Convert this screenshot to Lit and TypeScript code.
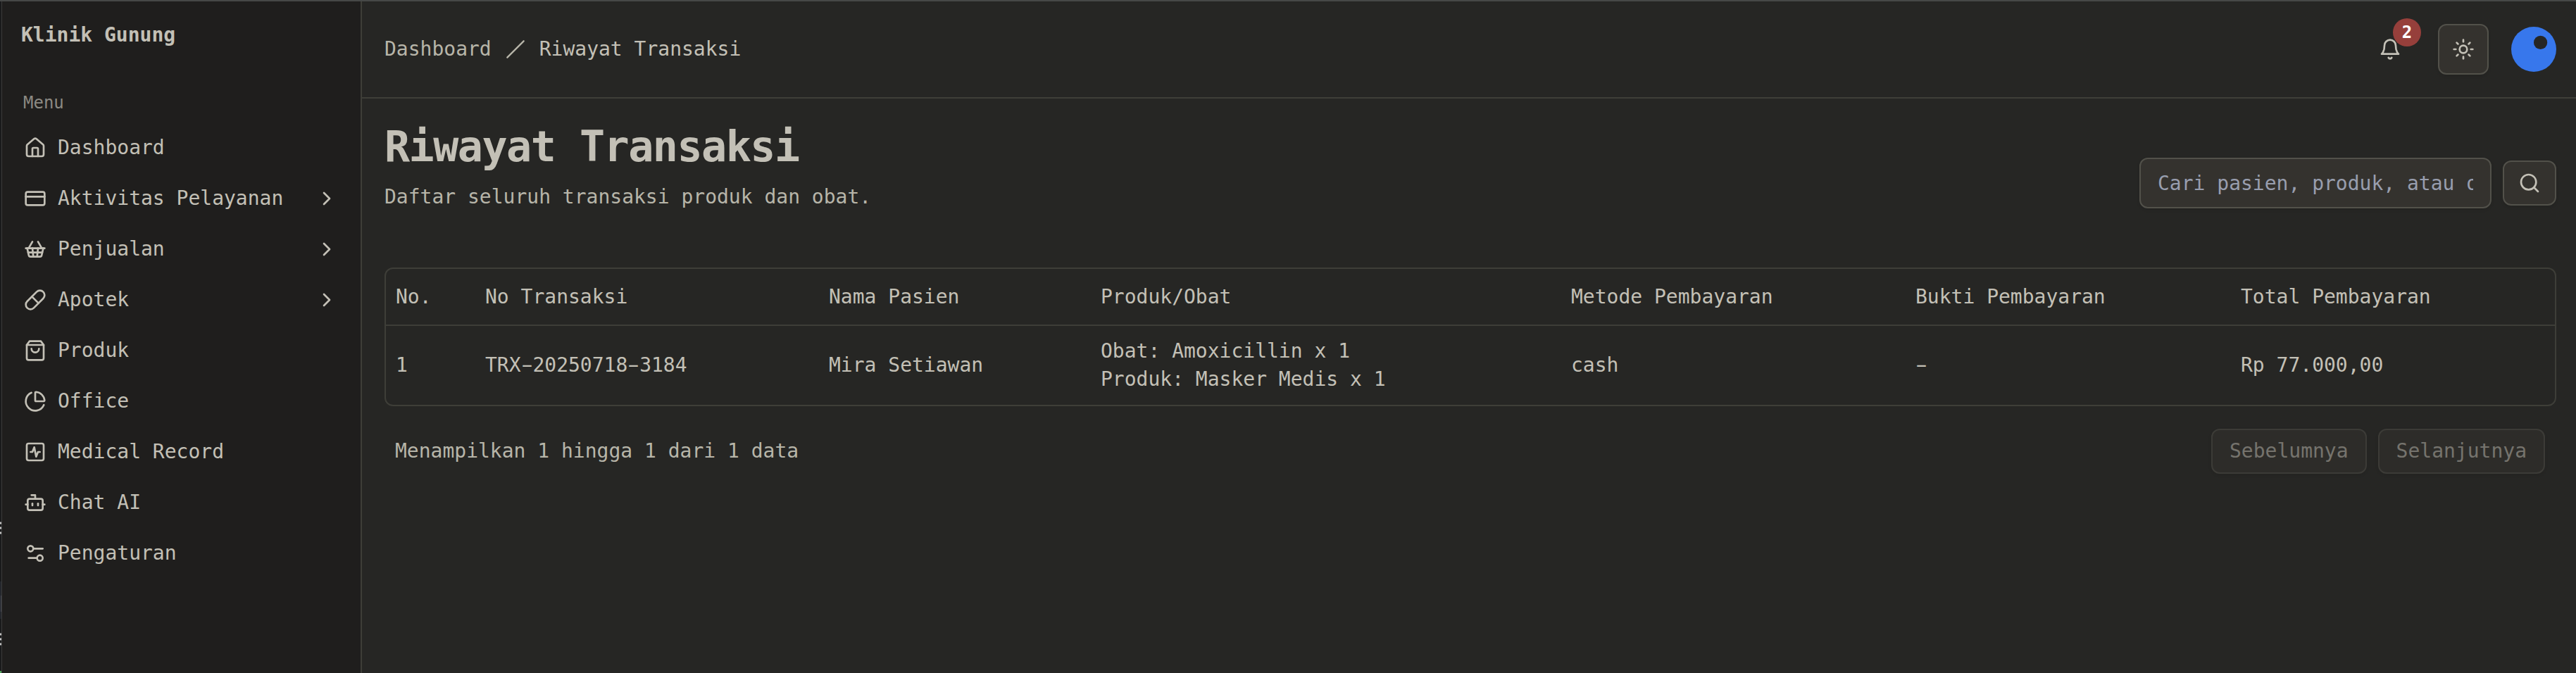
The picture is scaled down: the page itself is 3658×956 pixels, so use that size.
import { LitElement, html, css, svg } from "lit";
import { customElement } from "lit/decorators.js";

const ICONS: Record<string, unknown> = {
  house: svg`<path d="M15 21v-8a1 1 0 0 0-1-1h-4a1 1 0 0 0-1 1v8"/><path d="M3 10a2 2 0 0 1 .709-1.528l7-5.999a2 2 0 0 1 2.582 0l7 5.999A2 2 0 0 1 21 10v9a2 2 0 0 1-2 2H5a2 2 0 0 1-2-2z"/>`,
  card: svg`<rect width="20" height="14" x="2" y="5" rx="2"/><path d="M2 10h20"/>`,
  basket: svg`<path d="m15 11-1 9"/><path d="m19 11-4-7"/><path d="M2 11h20"/><path d="m3.5 11 1.6 7.4a2 2 0 0 0 2 1.6h9.8a2 2 0 0 0 2-1.6l1.7-7.4"/><path d="M4.5 15.5h15"/><path d="m5 11 4-7"/><path d="m9 11 1 9"/>`,
  pill: svg`<path d="m10.5 20.5 10-10a4.95 4.95 0 1 0-7-7l-10 10a4.95 4.95 0 1 0 7 7Z"/><path d="m8.5 8.5 7 7"/>`,
  bag: svg`<path d="M6 2 3 6v14a2 2 0 0 0 2 2h14a2 2 0 0 0 2-2V6l-3-4Z"/><path d="M3 6h18"/><path d="M16 10a4 4 0 0 1-8 0"/>`,
  pie: svg`<path d="M21 12c.552 0 1.005-.449.95-.998a10 10 0 0 0-8.953-8.951c-.55-.055-.998.398-.998.95v8a1 1 0 0 0 1 1z"/><path d="M21.21 15.89A10 10 0 1 1 8 2.83"/>`,
  activity: svg`<rect width="18" height="18" x="3" y="3" rx="2"/><path d="M17 12h-2l-2 5-2-10-2 5H7"/>`,
  bot: svg`<path d="M12 8V4H8"/><rect width="16" height="12" x="4" y="8" rx="2"/><path d="M2 14h2"/><path d="M20 14h2"/><path d="M15 13v2"/><path d="M9 13v2"/>`,
  settings: svg`<path d="M20 7h-9"/><path d="M14 17H5"/><circle cx="17" cy="17" r="3"/><circle cx="7" cy="7" r="3"/>`,
  chevron: svg`<path d="m9 18 6-6-6-6"/>`,
  slash: svg`<path d="M22 2 2 22"/>`,
  bell: svg`<path d="M6 8a6 6 0 0 1 12 0c0 7 3 9 3 9H3s3-2 3-9"/><path d="M10.3 21a1.94 1.94 0 0 0 3.4 0"/>`,
  sun: svg`<circle cx="12" cy="12" r="4"/><path d="M12 2v2"/><path d="M12 20v2"/><path d="m4.93 4.93 1.41 1.41"/><path d="m17.66 17.66 1.41 1.41"/><path d="M2 12h2"/><path d="M20 12h2"/><path d="m6.34 17.66-1.41 1.41"/><path d="m19.07 4.93-1.41 1.41"/>`,
  search: svg`<circle cx="11" cy="11" r="8"/><path d="m21 21-4.3-4.3"/>`,
};

const icon = (name: string, cls = "") =>
  html`<svg class="icon ${cls}" viewBox="0 0 24 24">${ICONS[name]}</svg>`;

// Hyphens are drawn wide, so that they fill their monospace cell.
const wideHyphens = (text: string) =>
  text.split("-").map((part, i) => html`${i ? html`<span class="hyphen">-</span>` : ""}${part}`);

const MENU: [string, string, boolean][] = [
  ["house", "Dashboard", false],
  ["card", "Aktivitas Pelayanan", true],
  ["basket", "Penjualan", true],
  ["pill", "Apotek", true],
  ["bag", "Produk", false],
  ["pie", "Office", false],
  ["activity", "Medical Record", false],
  ["bot", "Chat AI", false],
  ["settings", "Pengaturan", false],
];

const HEADERS = ["No.", "No Transaksi", "Nama Pasien", "Produk/Obat", "Metode Pembayaran", "Bukti Pembayaran", "Total Pembayaran"];
const ROWS: string[][][] = [
  [["1"], ["TRX-20250718-3184"], ["Mira Setiawan"], ["Obat: Amoxicillin x 1", "Produk: Masker Medis x 1"], ["cash"], ["-"], ["Rp 77.000,00"]],
];

@customElement("app-root")
export class AppRoot extends LitElement {
  static styles = css`
    * { box-sizing: border-box; }
    :host {
      display: flex; width: 3658px; height: 956px; overflow: hidden;
      background: #262624; color: #c3c0b6; border-top: 2px solid #464847;
      font: 28px/40px "DejaVu Sans Mono", monospace;
    }
    .icon { width: 32px; height: 32px; flex: none; display: block; fill: none; stroke: currentColor; stroke-width: 2; stroke-linecap: round; stroke-linejoin: round; }
    .edge { width: 3px; height: 954px; flex: none; background: #1a1b1c; border-right: 1px solid #3b3b3a; }
    .edge svg { display: block; }
    .sidebar { width: 511px; flex: none; background: #1f1e1d; border-right: 2px solid #3e3e38; }
    .brand { padding: 28px 0 0 27px; font-weight: 700; }
    .group { padding: 56px 0 0 30px; font-size: 24px; line-height: 40px; color: #8c8a83; }
    .menu { display: flex; flex-direction: column; gap: 8px; padding: 12px 16px 0 15px; }
    .item { display: flex; align-items: center; height: 64px; padding: 0 16px; gap: 16px; }
    .label { flex: 1; white-space: nowrap; }
    .main { flex: 1; min-width: 0; }
    .header { height: 138px; border-bottom: 2px solid #3e3e38; display: flex; align-items: center; justify-content: space-between; padding: 0 28px 0 32px; }
    .crumbs { display: flex; align-items: center; gap: 20px; }
    .muted { color: #b7b5a9; }
    .slash { width: 28px; height: 28px; color: #b7b5a9; }
    .actions { display: flex; align-items: center; }
    .notify { position: relative; margin-right: 52px; }
    .badge { position: absolute; left: 20px; top: -28px; width: 40px; height: 40px; border-radius: 50%; background: #963f3b; color: #fff; font-size: 24px; font-weight: 700; text-align: center; }
    .button { display: flex; align-items: center; justify-content: center; height: 64px; background: #34322e; border: 2px solid #52514a; border-radius: 12px; box-shadow: 0 2px 4px rgba(0,0,0,.1); }
    .theme { width: 72px; height: 72px; margin-right: 32px; }
    .avatar { width: 64px; height: 64px; display: block; }
    .content { padding: 32px 28px 0 32px; }
    .top { display: flex; justify-content: space-between; align-items: flex-start; height: 208px; }
    .title { margin: 0; font-size: 60px; line-height: 72px; letter-spacing: -1.5px; font-weight: 700; }
    .sub { margin: 16px 0 0; }
    .search { display: flex; align-items: center; gap: 16px; padding-top: 52px; }
    .input { width: 500px; height: 72px; padding: 0 24px; color: #c3c0b6; font: inherit; background: #34322e; border: 2px solid #52514a; border-radius: 12px; box-shadow: 0 2px 4px rgba(0,0,0,.1); }
    .input::placeholder { color: #989eae; opacity: 1; }
    .go { width: 76px; }
    .table { border: 2px solid #3e3e38; border-radius: 12px; height: 197px; }
    .row { display: grid; grid-template-columns: 127px 488px 386px 668px 489px 462px 1fr; padding-left: 14px; align-items: center; height: 112px; }
    .head { height: 81px; border-bottom: 2px solid #3e3e38; }
    .hyphen { display: inline-block; transform: scaleX(1.75); }
    .footer { display: flex; align-items: center; gap: 16px; padding: 32px 16px 0 15px; }
    .info { flex: 1; color: #b7b5a9; }
    .page { padding: 0 24px; opacity: .5; }
  `;

  render() {
    return html`
      <div class="edge">
        <svg width="2" height="954">
          <path d="M0 741h2M0 748h2M0 755h2M0 899h2M0 906h2M0 913h2" stroke="#c4c4c4" stroke-width="3"/>
          <rect y="824" width="2" height="53" fill="#24272d"/>
          <rect x="1" y="844" width="1" height="23" fill="#44454f"/>
          <rect y="951" width="2" height="3" fill="#4fa35a"/>
        </svg>
      </div>
      <nav class="sidebar">
        <div class="brand">Klinik Gunung</div>
        <div class="group">Menu</div>
        <div class="menu">
          ${MENU.map(([i, label, more]) => html`<div class="item">${icon(i)}<span class="label">${label}</span>${more ? icon("chevron") : ""}</div>`)}
        </div>
      </nav>
      <div class="main">
        <header class="header">
          <div class="crumbs"><span class="muted">Dashboard</span>${icon("slash", "slash")}<span>Riwayat Transaksi</span></div>
          <div class="actions">
            <div class="notify">${icon("bell")}<span class="badge">2</span></div>
            <div class="button theme">${icon("sun")}</div>
            <svg class="avatar" viewBox="0 0 64 64"><circle cx="32" cy="32" r="32" fill="#3777ec"/><circle cx="41.6" cy="22.4" r="9.6" fill="#262624"/></svg>
          </div>
        </header>
        <main class="content">
          <div class="top">
            <div>
              <h1 class="title">Riwayat Transaksi</h1>
              <p class="sub muted">Daftar seluruh transaksi produk dan obat.</p>
            </div>
            <div class="search">
              <input class="input" placeholder="Cari pasien, produk, atau obat..." />
              <div class="button go">${icon("search")}</div>
            </div>
          </div>
          <div class="table">
            <div class="row head">${HEADERS.map((h) => html`<div>${h}</div>`)}</div>
            ${ROWS.map((r) => html`<div class="row">${r.map((c) => html`<div>${c.map((l) => html`<div>${wideHyphens(l)}</div>`)}</div>`)}</div>`)}
          </div>
          <div class="footer">
            <span class="info">Menampilkan 1 hingga 1 dari 1 data</span>
            <div class="button page">Sebelumnya</div>
            <div class="button page">Selanjutnya</div>
          </div>
        </main>
      </div>
    `;
  }
}
